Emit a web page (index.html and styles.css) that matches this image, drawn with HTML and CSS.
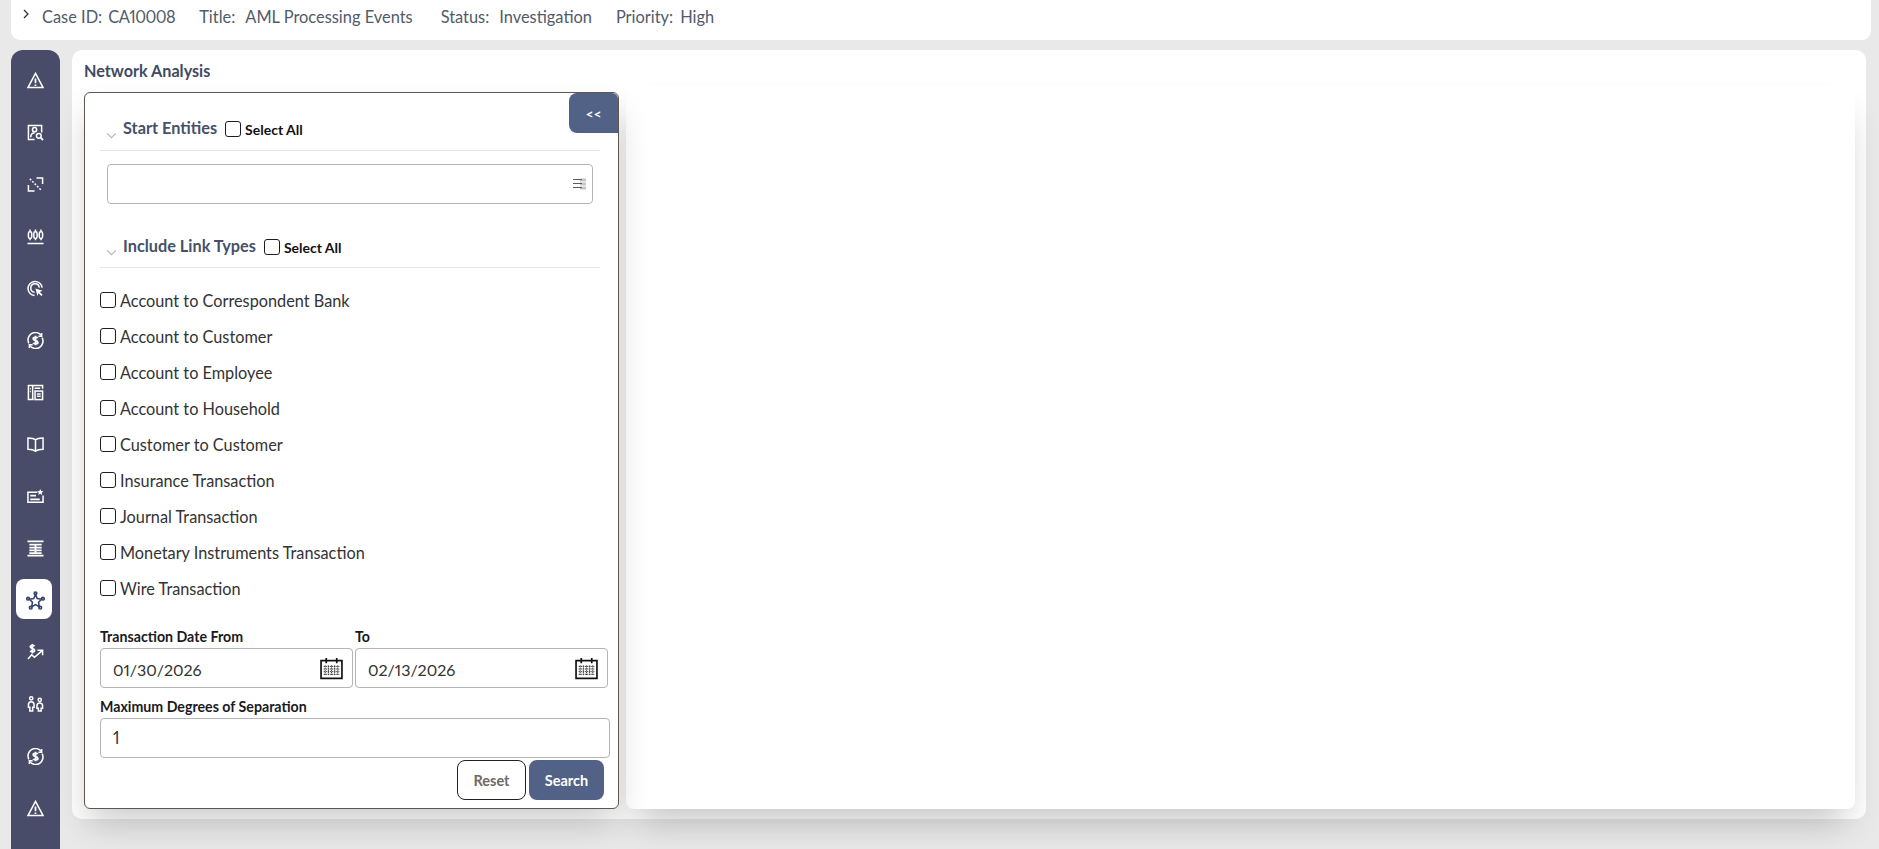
FILE: index.html
```html
<!DOCTYPE html>
<html lang="en">
<head>
<meta charset="utf-8">
<title>Network Analysis</title>
<link rel="stylesheet" href="styles.css">
</head>
<body>
<header class="casebar">
  <svg class="casebar-chev" viewBox="0 0 8 10"><path d="M2 1l4 4-4 4"/></svg>
  <span class="cb-k cb-first">Case ID:</span><span class="cb-v cb-id">CA10008</span>
  <span class="cb-k">Title:</span><span class="cb-v">AML Processing Events</span>
  <span class="cb-k cb-status">Status:</span><span class="cb-v">Investigation</span>
  <span class="cb-k cb-pri">Priority:</span><span class="cb-v">High</span>
</header>
<div class="workspace">
  <nav class="rail">
    <div class="rail-item"><svg class="ic" viewBox="0 0 18 18"><path d="M9 1.500L17 16.500H1z"/><path d="M9 7v5M9 13.200v1.500" class="thick"/></svg></div>
    <div class="rail-item"><svg class="ic" viewBox="0 0 18 18"><path d="M15.500 9V1.500h-14v15H8"/><circle cx="8" cy="6" r="2.200"/><path d="M4 14c0-3 1.500-4.500 4-4.500"/><circle cx="12.500" cy="12.500" r="2.500"/><path d="M14.500 14.500l2.500 2.500" class="thick"/></svg></div>
    <div class="rail-item"><svg class="ic" viewBox="0 0 18 18"><path d="M10 2h6.500v6.500M8 16H1.500V9.500"/><path d="M3 3l12 12" stroke-dasharray="2 1.600"/></svg></div>
    <div class="rail-item"><svg class="ic" viewBox="0 0 18 18"><rect x="1.500" y="4" width="3.500" height="7" rx="1.700"/><rect x="7.200" y="4" width="3.500" height="7" rx="1.700"/><rect x="13" y="4" width="3.500" height="7" rx="1.700"/><path d="M3.200 1.500v2.500M3.200 11v2M9 1.500v2.500M9 11v2M14.800 1.500v2.500M14.800 11v2M.5 16.500h17"/></svg></div>
    <div class="rail-item"><svg class="ic" viewBox="0 0 18 18"><path d="M8 16.500A7.500 7.500 0 1 1 16 8"/><path d="M8 13a4.500 4.500 0 1 1 5-5"/><path d="M9 9l7.500 2.500-3 1.200 3 3-1.300 1.300-3-3L11 17z" class="solid"/></svg></div>
    <div class="rail-item"><svg class="ic" viewBox="0 0 18 18"><path d="M2 12A7.800 7.800 0 0 1 15 3.500M16 6a7.800 7.800 0 0 1-13 8.500"/><path d="M15.500 1v3.500H12M2.500 17v-3.500H6"/><path d="M11.500 6.500C11 5.500 6.500 5 6.500 7.200S11.500 9 11.500 11 7 12.500 6.500 11.500M9 4v10" class="thick"/></svg></div>
    <div class="rail-item"><svg class="ic" viewBox="0 0 18 18"><path d="M16.500 5V1.500h-15v15H7"/><path d="M6 2v14.500M3 5h1M3 8h1M8 4.500h6"/><rect x="8.500" y="7.500" width="8" height="9"/><path d="M10.500 10.500h4M10.500 13h4"/></svg></div>
    <div class="rail-item"><svg class="ic" viewBox="0 0 18 18"><path d="M9 4C7.500 2.500 4 2 1 2v12c3 0 6 .5 8 2 2-1.500 5-2 8-2V2c-3 0-6.500.5-8 2zM9 4v13"/></svg></div>
    <div class="rail-item"><svg class="ic" viewBox="0 0 18 18"><path d="M11 4.500H1v10.500h16V8"/><path d="M3.500 8h6M3.500 12h10" class="thick"/><path d="M14 1l1 2.200 2.300.3-1.700 1.500.5 2.300-2.100-1.200-2 1.200.5-2.300-1.700-1.500 2.300-.3z" class="solid"/></svg></div>
    <div class="rail-item"><svg class="ic" viewBox="0 0 18 18"><path d="M.5 1.500h17M.5 16.500h17" class="thick"/><path d="M2.500 5h13M2.500 8h13M2.500 11h13M2.500 14h13M9 5v9" class="thick"/></svg></div>
    <div class="rail-item"><span class="rail-tile"><svg class="ic ic-dark" viewBox="0 0 18 18"><path d="M9 3.500l1.700 3.700 4.100.6-2.900 2.900.7 4.200L9 12.900l-3.600 2 .7-4.200-2.900-2.900 4.100-.6z"/><circle cx="9" cy="2.200" r="1.300"/><circle cx="2" cy="7.300" r="1.300"/><circle cx="16" cy="7.300" r="1.300"/><circle cx="4.500" cy="15.800" r="1.300"/><circle cx="13.500" cy="15.800" r="1.300"/></svg></span></div>
    <div class="rail-item"><svg class="ic" viewBox="0 0 18 18"><path d="M1 16l4-4.500 3 2.500 8-7M11 6.500h5.500V12"/><path d="M8 2.500C7 1 3.500 1 3.500 3S8 4.500 8 6.500 4 8.500 3.500 7M5.700 0v10" class="thick"/></svg></div>
    <div class="rail-item"><svg class="ic" viewBox="0 0 18 18"><circle cx="4.500" cy="2.500" r="1.700"/><circle cx="13.500" cy="4" r="1.700"/><path d="M4.500 6C2.500 6 1.500 7.500 1.500 9.500v2.500h1.500v4h3v-4h1.500V9.500C7.500 7.500 6.500 6 4.500 6zM13.500 7.500c-2 0-3 1.200-3 3V13h1.500v3h3v-3h1.500v-2.500c0-1.800-1-3-3-3z"/></svg></div>
    <div class="rail-item"><svg class="ic" viewBox="0 0 18 18"><path d="M2 12A7.800 7.800 0 0 1 15 3.500M16 6a7.800 7.800 0 0 1-13 8.500"/><path d="M15.500 1v3.500H12M2.500 17v-3.500H6"/><path d="M11.500 6.500C11 5.500 6.500 5 6.500 7.200S11.500 9 11.500 11 7 12.500 6.500 11.500M9 4v10" class="thick"/></svg></div>
    <div class="rail-item"><svg class="ic" viewBox="0 0 18 18"><path d="M9 1.500L17 16.500H1z"/><path d="M9 7v5M9 13.200v1.500" class="thick"/></svg></div>
  </nav>
  <main class="card">
    <h1 class="card-title">Network Analysis</h1>
    <div class="split">
      <section class="panel">
        <button class="collapse" type="button">&lt;&lt;</button>
        <div class="sec-head sec-first">
          <svg class="sec-chev" viewBox="0 0 12 8"><path d="M1 1.500l5 5 5-5"/></svg>
          <span class="sec-title">Start Entities</span>
          <span class="box"></span><span class="sel-all">Select All</span>
        </div>
        <div class="search-field">
          <svg class="list-ic" viewBox="0 0 14 12"><path d="M7 2h6M7 6h6M7 10h6" class="li-l"/><path d="M0 1.500h9M0 5.500h9M0 9.500h9" class="li-d"/></svg>
        </div>
        <div class="sec-head sec-second">
          <svg class="sec-chev" viewBox="0 0 12 8"><path d="M1 1.500l5 5 5-5"/></svg>
          <span class="sec-title">Include Link Types</span>
          <span class="box"></span><span class="sel-all">Select All</span>
        </div>
        <ul class="links">
          <li class="link"><span class="box"></span>Account to Correspondent Bank</li>
          <li class="link"><span class="box"></span>Account to Customer</li>
          <li class="link"><span class="box"></span>Account to Employee</li>
          <li class="link"><span class="box"></span>Account to Household</li>
          <li class="link"><span class="box"></span>Customer to Customer</li>
          <li class="link"><span class="box"></span>Insurance Transaction</li>
          <li class="link"><span class="box"></span>Journal Transaction</li>
          <li class="link"><span class="box"></span>Monetary Instruments Transaction</li>
          <li class="link"><span class="box"></span>Wire Transaction</li>
        </ul>
        <div class="dates">
          <div class="date-col">
            <label class="lbl">Transaction Date From</label>
            <div class="field date-field"><span class="date-val">01/30/2026</span>
              <svg class="cal" viewBox="0 0 22 22"><path d="M1 3.500h20v17H1z" class="cal-b"/><path d="M6 1v5M16 1v5" class="cal-b"/><path d="M3.500 9h15M3.500 11.500h15M3.500 14h15M3.500 16.500h15M5 8v10M8 8v10M11 8v10M14 8v10M17 8v10" class="cal-g"/></svg>
            </div>
          </div>
          <div class="date-col">
            <label class="lbl">To</label>
            <div class="field date-field"><span class="date-val">02/13/2026</span>
              <svg class="cal" viewBox="0 0 22 22"><path d="M1 3.500h20v17H1z" class="cal-b"/><path d="M6 1v5M16 1v5" class="cal-b"/><path d="M3.500 9h15M3.500 11.500h15M3.500 14h15M3.500 16.500h15M5 8v10M8 8v10M11 8v10M14 8v10M17 8v10" class="cal-g"/></svg>
            </div>
          </div>
        </div>
        <label class="lbl lbl-max">Maximum Degrees of Separation</label>
        <div class="field field-max">1</div>
        <div class="actions">
          <button class="btn btn-reset" type="button">Reset</button>
          <button class="btn btn-search" type="button">Search</button>
        </div>
      </section>
      <section class="canvas"></section>
    </div>
  </main>
</div>
</body>
</html>
```
FILE: styles.css
```css
* { box-sizing: border-box; }
html, body { margin: 0; height: 100%; }
body {
  height: 849px;
  overflow: hidden;
  background: #e9e9e9;
  font-family: Lato, "Noto Sans", sans-serif;
  font-variant-numeric: proportional-nums;
  color: #333;
}
.casebar {
  height: 40px;
  margin: 0 8px 0 11px;
  padding: 0 0 8px 11px;
  background: #fff;
  border-radius: 0 0 9px 9px;
  display: flex;
  align-items: center;
  font-size: 16.400px;
  color: #515a6a;
}
.casebar-chev { width: 8px; height: 10px; position: relative; top: -2px; }
.casebar-chev path { fill: none; stroke: #333; stroke-width: 1.300; }
.cb-k { margin-left: 24px; margin-right: 10px; }
.cb-first { margin-left: 12px; margin-right: 6px; }
.cb-id { letter-spacing: -.5px; }
.cb-status { margin-left: 28px; }
.cb-pri { margin-right: 7px; }
.workspace {
  display: flex;
  margin-top: 10px;
  height: 799px;
  padding-left: 11px;
}
.rail {
  width: 49px;
  height: 820px;
  flex: none;
  background: #484c69;
  border-radius: 12px 12px 0 0;
  padding-top: 4px;
  display: flex;
  flex-direction: column;
  align-items: center;
}
.rail-item {
  width: 100%;
  height: 52px;
  flex: none;
  display: flex;
  align-items: center;
  justify-content: center;
}
.rail-tile {
  width: 36px;
  height: 40px;
  background: #fff;
  border-radius: 8px;
  margin: -2px 0 0 -3px;
  display: flex;
  align-items: center;
  justify-content: center;
}
.rail-tile .ic { margin: 2px 0 0 3px; }
.ic { width: 17px; height: 17px; fill: none; stroke: #fff; stroke-width: 1.600; display: block; }
.ic .thick { stroke-width: 1.900; }
.ic .solid { fill: #fff; stroke: none; }
.ic-dark { stroke: #34426f; width: 19px; height: 19px; stroke-width: 1.500; }
.card {
  width: 1794px;
  height: 769px;
  margin-left: 12px;
  background: #fff;
  border-radius: 10px;
  padding: 0 11px 10px 12px;
  display: flex;
  flex-direction: column;
}
.card-title {
  margin: 0;
  height: 42px;
  padding-bottom: 2px;
  display: flex;
  align-items: center;
  font-size: 16.200px;
  font-weight: 700;
  color: #3f4a62;
}
.split { flex: 1; display: flex; gap: 7px; min-height: 0; }
.panel {
  position: relative;
  z-index: 1;
  width: 535px;
  flex: none;
  border: 1px solid #5f5650;
  border-radius: 6px;
  background: #fff;
  padding: 0 8px 0 15px;
  box-shadow: 0 18px 34px -4px rgba(0, 0, 0, .2);
  display: flex;
  flex-direction: column;
}
.canvas {
  flex: 1;
  margin-top: -6px;
  background: #fff;
  border-radius: 8px;
  box-shadow: 0 22px 34px -10px rgba(0, 0, 0, .24);
}
.collapse {
  position: absolute;
  top: 0;
  right: 0;
  width: 49px;
  height: 40px;
  border: 0;
  border-radius: 8px 6px 0 8px;
  background: #526186;
  color: #fff;
  font: 700 14px Lato, sans-serif;
  padding: 0;
}
.sec-head {
  display: flex;
  align-items: center;
  height: 41px;
  border-bottom: 1px solid #e6e6e6;
  padding-left: 6px;
  margin-right: 10px;
}
.sec-first { margin-top: 17px; padding-bottom: 2px; }
.sec-second { margin-top: 23px; }
.sec-chev { width: 11px; height: 7px; fill: none; stroke: #b5b5b5; stroke-width: 1.200; margin-right: 6px; position: relative; top: 5px; }
.sec-first .sec-chev { top: 6px; }
.sec-title { font-size: 16.300px; font-weight: 700; color: #46506a; margin-right: 8px; position: relative; top: -2px; }
.sel-all { font-size: 14px; font-weight: 700; color: #111; margin-left: 4px; }
.box {
  width: 16px;
  height: 16px;
  flex: none;
  border: 1.500px solid #1c1c2a;
  border-radius: 3px;
  background: #fff;
  display: inline-block;
}
.search-field {
  height: 40px;
  width: 486px;
  margin: 13px 0 0 7px;
  border: 1px solid #b4b4b4;
  border-radius: 4px;
  display: flex;
  align-items: center;
  justify-content: flex-end;
  padding-right: 5px;
  flex: none;
}
.list-ic { width: 14px; height: 12px; fill: none; }
.li-d { stroke: #5b5b66; stroke-width: 1.100; }
.li-l { stroke: #c6c6c6; stroke-width: 3; }
.links { list-style: none; margin: 14px 0 0; padding: 0; }
.link {
  height: 36px;
  display: flex;
  align-items: center;
  gap: 4px;
  font-size: 16.300px;
  color: #333;
}
.dates { display: flex; gap: 2px; margin-top: 19px; }
.date-col { display: flex; flex-direction: column; width: 253px; }
.lbl { font-size: 14.200px; font-weight: 700; color: #1a1a22; height: 23px; line-height: 23px; display: block; }
.field {
  height: 40px;
  border: 1px solid #b4b4b4;
  border-radius: 4px;
  padding: 0 12px;
  font-size: 16.500px;
  color: #333;
  display: flex;
  align-items: center;
  justify-content: space-between;
}
.date-field { padding-right: 9px; }
.date-val { font-size: 16px; position: relative; top: 1px; }
.cal { width: 23px; height: 23px; fill: none; }
.cal-b { stroke: #111; stroke-width: 1.600; }
.cal-g { stroke: #333; stroke-width: .9; stroke-dasharray: 1.300 .7; }
.lbl-max { margin-top: 7px; }
.field-max { width: 510px; }
.actions { display: flex; justify-content: flex-end; gap: 3px; margin-top: 2px; padding-right: 6px; }
.btn {
  height: 40px;
  border-radius: 8px;
  font: 700 14.500px Lato, sans-serif;
  padding: 0;
}
.btn-reset { width: 69px; background: #fff; color: #6e6a66; border: 1px solid #222; }
.btn-search { width: 75px; background: #526186; color: #fff; border: 0; }
```
